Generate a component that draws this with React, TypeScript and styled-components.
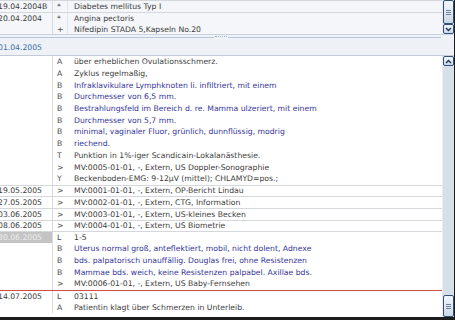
import React from "react";
import styled, { createGlobalStyle } from "styled-components";

type Entry = [string, string, boolean?];

interface IGroup {
  date: string;
  entries: Entry[];
  selected?: boolean;
  red?: boolean;
}

const topGroups: IGroup[] = [
  { date: "19.04.2004B", entries: [["*", "Diabetes mellitus Typ I"]] },
  {
    date: "20.04.2004",
    entries: [
      ["*", "Angina pectoris"],
      ["+", "Nifedipin STADA 5,Kapseln No.20"],
    ],
  },
];

const lowerGroups: IGroup[] = [
  {
    date: "",
    entries: [
      ["A", "über erheblichen Ovulationsschmerz."],
      ["A", "Zyklus regelmaßig,"],
      ["B", "Infraklavikulare Lymphknoten li. infiltriert, mit einem", true],
      ["B", "Durchmesser von 6,5 mm.", true],
      ["B", "Bestrahlungsfeld im Bereich d. re. Mamma ulzeriert, mit einem", true],
      ["B", "Durchmesser von 5,7 mm.", true],
      ["B", "minimal, vaginaler Fluor, grünlich, dunnflüssig, modrig", true],
      ["B", "riechend.", true],
      ["T", "Punktion in 1%-iger Scandicain-Lokalanästhesie."],
      [">", "MV:0005-01-01, -, Extern, US Doppler-Sonographie"],
      ["Y", "Beckenboden-EMG: 9-12µV (mittel); CHLAMYD=pos.;"],
    ],
  },
  { date: "19.05.2005", entries: [[">", "MV:0001-01-01, -, Extern, OP-Bericht Lindau"]] },
  { date: "27.05.2005", entries: [[">", "MV:0002-01-01, -, Extern, CTG, Information"]] },
  { date: "03.06.2005", entries: [[">", "MV:0003-01-01, -, Extern, US-kleines Becken"]] },
  { date: "08.06.2005", entries: [[">", "MV:0004-01-01, -, Extern, US Biometrie"]] },
  {
    date: "30.06.2005",
    selected: true,
    entries: [
      ["L", "1-5"],
      ["B", "Uterus normal groß, anteflektiert, mobil, nicht dolent,  Adnexe", true],
      ["B", "bds. palpatorisch unauffällig. Douglas frei, ohne Resistenzen", true],
      ["B", "Mammae bds. weich, keine Resistenzen palpabel. Axillae bds.", true],
      [">", "MV:0006-01-01, -, Extern, US Baby-Fernsehen"],
    ],
  },
  {
    date: "14.07.2005",
    red: true,
    entries: [
      ["L", "03111"],
      ["A", "Patientin klagt über Schmerzen in Unterleib."],
    ],
  },
];

const GlobalStyle = createGlobalStyle`
  body {
    margin: 0;
    background: #ffffff;
  }
`;

const Frame = styled.div`
  width: 455px;
  height: 320px;
  box-sizing: border-box;
  border-right: 1px solid #1c1c1c;
  border-bottom: 3px solid #1c1c1c;
  display: flex;
  flex-direction: column;
  overflow: hidden;
  background: #ffffff;
  font-family: "DejaVu Sans", Verdana, sans-serif;
  font-size: 7.7px;
  color: #3c3c3c;
`;

const TopPane = styled.div`
  display: flex;
  height: 35px;
  flex-shrink: 0;
  background: #f4f6f9;
  border-bottom: 1px solid #c9d3de;
  box-sizing: border-box;
`;

const List = styled.div<{ $cols?: boolean }>`
  flex: 1;
  margin-left: -2px;
  position: relative;
  overflow: hidden;
`;

const Row = styled.div<{ $line?: string }>`
  display: grid;
  grid-template-columns: 55px 15px 1fr;
  height: 11.7px;
  box-sizing: border-box;
  border-top: ${(p) => (p.$line ? `1px solid ${p.$line}` : "none")};
`;

const DateCell = styled.div<{ $selected?: boolean }>`
  display: flex;
  align-items: center;
  white-space: nowrap;
  border-right: 1px solid #d6d9dd;
  background: ${(p) => (p.$selected ? "#c4c4c4" : "transparent")};
  color: ${(p) => (p.$selected ? "#ececec" : "#3c3c3c")};
`;

const CodeCell = styled.div<{ $divider?: boolean }>`
  display: flex;
  align-items: center;
  padding-left: 4px;
  color: #4a4a4a;
  border-right: ${(p) => (p.$divider ? "1px solid #e2e6ea" : "none")};
`;

const TextCell = styled.div<{ $blue?: boolean }>`
  display: flex;
  align-items: center;
  padding-left: 6px;
  white-space: nowrap;
  color: ${(p) => (p.$blue ? "#35359a" : "#3c3c3c")};
`;

const Splitter = styled.div`
  height: 3px;
  flex-shrink: 0;
  display: flex;
  align-items: flex-end;
  padding-right: 13px;
  background: #eef2f7;
`;

const SplitLine = styled.div`
  flex: 1;
  height: 1px;
  background: #b8c8da;
`;

const Grip = styled.div`
  width: 12px;
  height: 1px;
  margin: 0 1px;
  border-top: 1px dotted #9fb0c4;
`;

const DateHeader = styled.div`
  height: 18px;
  flex-shrink: 0;
  box-sizing: border-box;
  display: flex;
  align-items: flex-end;
  padding: 0 0 3px 0;
  margin-left: -2px;
  background: #eef2f7;
  border-bottom: 1px solid #c3ccd6;
  color: #3d6ca3;
`;

const LowerPane = styled.div`
  flex: 1;
  display: flex;
  min-height: 0;
`;

const ScrollTrack = styled.div`
  width: 11px;
  flex-shrink: 0;
  display: flex;
  flex-direction: column;
  justify-content: space-between;
  background: #d7e0e9;
  border-left: 1px solid #e8edf2;
`;

const ScrollBtn = styled.div<{ $h: number }>`
  height: ${(p) => p.$h}px;
  box-sizing: border-box;
  border: 1px solid #2f4f7c;
  border-radius: 2px;
  background: linear-gradient(#f4f7fb, #cbd8e6);
  display: flex;
  align-items: center;
  justify-content: center;
`;

const GripLines = styled.div`
  width: 5px;
  height: 5px;
  background: repeating-linear-gradient(
    #6d84a3 0,
    #6d84a3 1px,
    transparent 1px,
    transparent 2px
  );
`;

function Chevron({ up }: { up?: boolean }) {
  return (
    <svg width="7" height="5" viewBox="0 0 7 5">
      <path
        d={up ? "M1 4 L3.5 1.5 L6 4" : "M1 1 L3.5 3.5 L6 1"}
        fill="none"
        stroke="#1d3457"
        strokeWidth="1.4"
      />
    </svg>
  );
}

function GroupRows({ group, topCols }: { group: IGroup; topCols?: boolean }) {
  const line = group.red ? "#d24a4a" : "#d4d7db";
  return (
    <>
      {group.entries.map(([code, text, blue], i) => (
        <Row key={i} $line={i === 0 && group.date ? line : undefined}>
          <DateCell $selected={i === 0 && group.selected}>
            {i === 0 ? group.date : ""}
          </DateCell>
          <CodeCell $divider={topCols}>{code}</CodeCell>
          <TextCell $blue={blue}>{text}</TextCell>
        </Row>
      ))}
    </>
  );
}

const App: React.FC = () => {
  return (
    <>
      <GlobalStyle />
      <Frame>
        <TopPane>
          <List>
            {topGroups.map((g, i) => (
              <GroupRows key={i} group={g} topCols />
            ))}
          </List>
          <ScrollTrack>
            <ScrollBtn $h={24}>
              <GripLines />
            </ScrollBtn>
            <ScrollBtn $h={10}>
              <Chevron />
            </ScrollBtn>
          </ScrollTrack>
        </TopPane>
        <Splitter>
          <SplitLine />
          <Grip />
          <SplitLine />
        </Splitter>
        <DateHeader>01.04.2005</DateHeader>
        <LowerPane>
          <List>
            {lowerGroups.map((g, i) => (
              <GroupRows key={i} group={g} />
            ))}
          </List>
          <ScrollTrack>
            <ScrollBtn $h={10}>
              <Chevron up />
            </ScrollBtn>
            <ScrollBtn $h={22}>
              <GripLines />
            </ScrollBtn>
          </ScrollTrack>
        </LowerPane>
      </Frame>
    </>
  );
};

export default App;
